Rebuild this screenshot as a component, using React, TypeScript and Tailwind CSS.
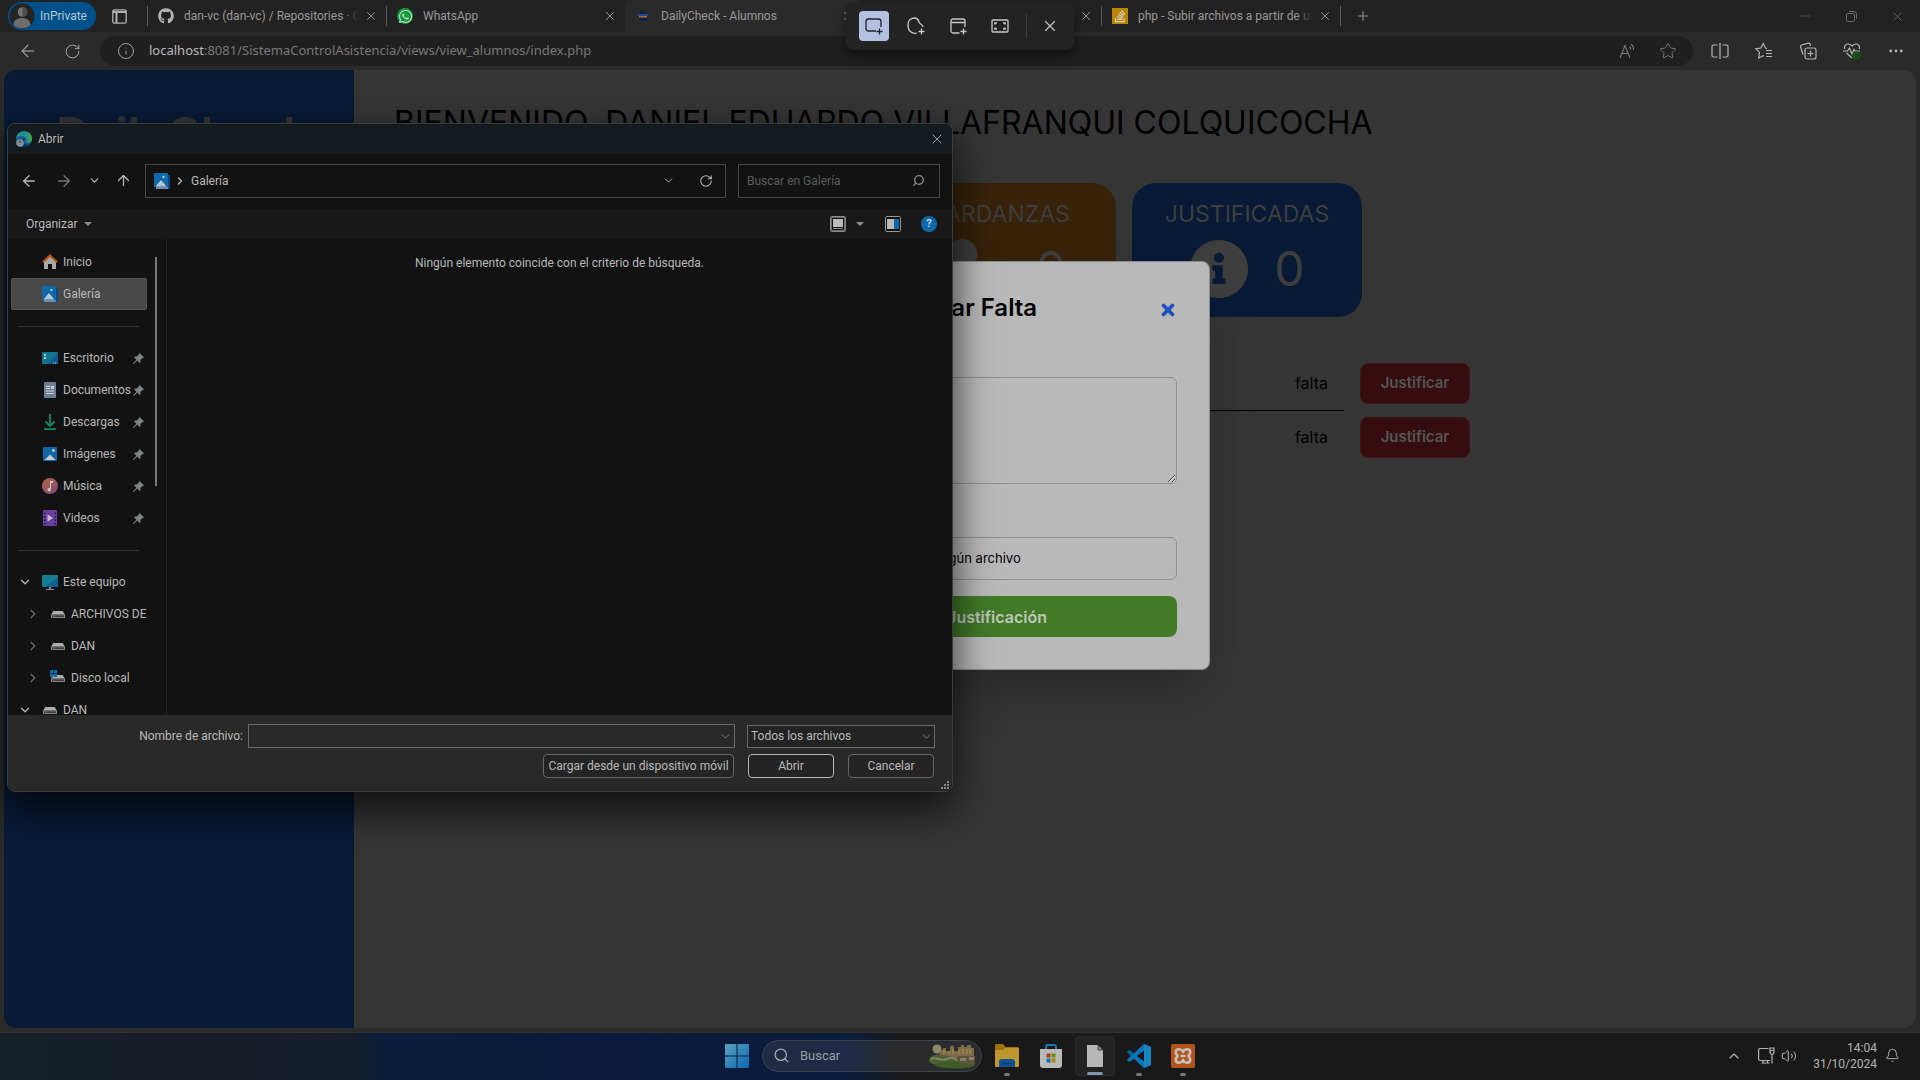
import type { ReactNode } from "react";
import {
  ArrowLeft,
  ArrowRight,
  ArrowUp,
  Bell,
  ChevronDown,
  ChevronRight,
  ChevronUp,
  Ellipsis,
  Info,
  Minus,
  Plus,
  RotateCw,
  Search,
  Star,
  Volume2,
  X,
} from "lucide-react";
import { FaGithub, FaInfoCircle, FaStackOverflow, FaUserClock, FaWhatsapp } from "react-icons/fa";

/* ---------- small drawings ---------- */

function GalleryIcon() {
  return (
    <svg width="16" height="16" viewBox="0 0 16 16" className="shrink-0">
      <rect x="2.5" y="2" width="13.5" height="14" rx="1" fill="#0b4a86" />
      <rect x="2" y="14" width="12" height="2" fill="#6d8fae" />
      <rect width="14" height="14" rx="1" fill="#0f69a8" />
      <path d="M1.5 13.5 7 7l5.5 6.5z" fill="#bcc6cf" />
      <circle cx="9.5" cy="4" r="1.2" fill="#bcc6cf" />
    </svg>
  );
}

function HomeIcon() {
  return (
    <svg width="16" height="16" viewBox="0 0 16 16" className="shrink-0">
      <path d="M2 7.5 8 2l6 5.5V15H10v-5H6v5H2z" fill="#a9a9a9" />
      <path d="M.8 8.2 8 1.4l7.2 6.8" fill="none" stroke="#b5560f" strokeWidth="2" />
    </svg>
  );
}

function DesktopIcon() {
  return (
    <svg width="16" height="16" viewBox="0 0 16 16" className="shrink-0">
      <rect y="2" width="16" height="12" rx="1" fill="#137490" />
      <path d="M16 3v11H6z" fill="#0c5a8e" />
      <path d="M2 4h2v2H2zM2 7h2v2H2zM11 12.5h1v1h-1zM13 12.5h1v1h-1z" fill="#b9c6cc" />
    </svg>
  );
}

function DocumentsIcon() {
  return (
    <svg width="16" height="16" viewBox="0 0 16 16" className="shrink-0">
      <rect x="2" width="12" height="16" rx="1" fill="#6f8096" />
      <path d="M4 4h4v1H4zM4 6h4v1H4zM9 4h3v3H9zM4 8.5h8v1H4zM4 11h8v1H4z" fill="#c8cdd3" />
    </svg>
  );
}

function DownloadsIcon() {
  return (
    <svg width="16" height="16" viewBox="0 0 16 16" className="shrink-0" fill="none" stroke="#138a68" strokeWidth="1.8">
      <path d="M8 0v12M3.5 7.5 8 12l4.5-4.5M2 15.1h12" />
    </svg>
  );
}

function PicturesIcon() {
  return (
    <svg width="16" height="16" viewBox="0 0 16 16" className="shrink-0">
      <rect x="1" y="1" width="14" height="14" rx="1" fill="#0f67a8" />
      <path d="M2.5 14 8 8.5 13.5 14z" fill="#c4ccd3" />
      <circle cx="11.5" cy="4.5" r="1.4" fill="#c4ccd3" />
    </svg>
  );
}

function MusicIcon() {
  return (
    <svg width="16" height="16" viewBox="0 0 16 16" className="shrink-0">
      <defs>
        <linearGradient id="music" x1="0" y1="0" x2="1" y2="1">
          <stop offset="0" stopColor="#b5643e" />
          <stop offset="1" stopColor="#7d4778" />
        </linearGradient>
      </defs>
      <circle cx="8" cy="8" r="8" fill="url(#music)" />
      <path d="M8 3h3v2H9v6.5A1.8 1.8 0 1 1 8 10z" fill="#c9c4c4" />
    </svg>
  );
}

function VideosIcon() {
  return (
    <svg width="16" height="16" viewBox="0 0 16 16" className="shrink-0">
      <rect x="1" width="14" height="16" rx="1" fill="#6b3fa0" />
      <path
        d="M2 2.5h1.5V4H2zM2 6h1.5v1.5H2zM2 9.5h1.5V11H2zM2 13h1.5v1.5H2zM12.5 2.5H14V4h-1.5zM12.5 6H14v1.5h-1.5zM12.5 9.5H14V11h-1.5zM12.5 13H14v1.5h-1.5z"
        fill="#2a1446"
      />
      <path d="M5.5 4.5 11 8l-5.5 3.5z" fill="#c7bdd3" />
    </svg>
  );
}

function ComputerIcon() {
  return (
    <svg width="16" height="16" viewBox="0 0 16 16" className="shrink-0">
      <rect y="1" width="16" height="12" rx="1" fill="#157d92" />
      <path d="M16 3v9a1 1 0 0 1-1 1H3z" fill="#0e6190" />
      <path d="M7 13h2v2h3v1H4v-1h3z" fill="#8b9499" />
    </svg>
  );
}

function DriveIcon({ system = false }: { system?: boolean }) {
  return (
    <svg width="16" height="16" viewBox="0 0 16 16" className="shrink-0">
      <path d="M3.5 5h9L15 8.5H1z" fill="#adadad" />
      <path d="M1 8.5h14V12H1z" fill="#8a8a8a" />
      <path d="M2 9.3h12v1.8H2z" fill="#3c3c3c" />
      <path d="M3.5 9.7h1v1h-1z" fill="#2fae4c" />
      {system && <path d="M0 0h3.3v3.2H0zM3.9 0h3.3v3.2H3.9zM0 3.8h3.3V7H0zM3.9 3.8h3.3V7H3.9z" fill="#0e6cab" />}
    </svg>
  );
}

function PinIcon() {
  return (
    <svg width="11" height="11" viewBox="0 0 11 11" className="shrink-0">
      <path d="M6.5 0 11 4.5l-1 .8-.8-.1-1.8 1.9.2 2-.9.9L4.2 7.5.8 11 0 10.2l3.5-3.4L1 4.3l.9-.9 2 .2 1.9-1.8-.1-.9z" fill="#7c8489" />
    </svg>
  );
}

function EdgeIcon() {
  return (
    <svg width="16" height="16" viewBox="0 0 16 16" className="shrink-0">
      <circle cx="8" cy="8" r="8" fill="#0d5c9b" />
      <path d="M.6 5.5A8 8 0 0 1 16 8c0 2.6-2 3.9-4 3.9-2.2 0-2.6-.9-2-1.7.8-1 .8-4.2-2.5-4.7C4.5 5 1.5 5.5.1 7.500z" fill="#27918f" />
      <path d="M12.5 1.5A8 8 0 0 1 16 8c0 2.5-2.2 3.9-4.3 3.8z" fill="#3d9e55" />
      <path d="M8.5 7c-2 .8-2.5 3-1 5 1.8 2.2 5 2 6.5 1.2L11 16H7z" fill="#06325f" />
      <circle cx="4" cy="12" r="3.8" fill="#8a8f94" />
      <circle cx="4" cy="10.8" r="1.3" fill="#55595d" />
    </svg>
  );
}

function SiteIcon() {
  return (
    <svg width="16" height="16" viewBox="0 0 16 16" className="shrink-0">
      <path d="M5 3.500h6l1 2.500v6.500H4V6z" fill="#0c2347" />
      <path d="M3 6h10v2H3z" fill="#1d4d8c" />
      <path d="M4 8h8v1.5H4z" fill="#b0653a" />
    </svg>
  );
}

function VsCodeIcon() {
  return (
    <svg width="24" height="24" viewBox="0 0 24 24">
      <path d="M17 0 7 9.5 2.5 6 .3 7.3v1.5L17 24z" fill="#08609d" />
      <path d="M17 0 .3 15.2v1.5L2.5 18 7 14.5 17 24l7-3V3z" fill="#0a75b5" />
      <path d="M17 6.5v11L9.8 12z" fill="#191919" />
      <path d="M17 0v24l7-3V3z" fill="#1684c3" />
    </svg>
  );
}

function XamppIcon() {
  return (
    <svg width="24" height="24" viewBox="0 0 24 24">
      <rect width="24" height="24" rx="2" fill="#b4531a" />
      <path
        d="M12 7.500C10.500 5 5 4 4.800 8c-.1 2.500 1.700 3 1.700 4s-1.800 1.500-1.700 4c.2 4 5.700 3 7.200.5 1.500 2.500 7 3.500 7.200-.5.1-2.500-1.700-3-1.700-4s1.800-1.500 1.700-4C19 4 13.500 5 12 7.500zM9.500 12h5"
        fill="none"
        stroke="#c4c0bd"
        strokeWidth="2.6"
      />
    </svg>
  );
}

function FolderAppIcon() {
  return (
    <svg width="24" height="24" viewBox="0 0 24 24">
      <path d="M0 1.5A1.5 1.5 0 0 1 1.5 0H8l2.5 3H23a1 1 0 0 1 1 1v6H0z" fill="#9d7309" />
      <path d="M0 6h8l2-2h13a1 1 0 0 1 1 1v17a1 1 0 0 1-1 1H1a1 1 0 0 1-1-1z" fill="#bd9630" />
      <path d="M4 23v-5a3 3 0 0 1 3-3h10a3 3 0 0 1 3 3v5z" fill="#0b5596" />
      <path d="M7 19.5h10" stroke="#073a6a" strokeWidth="1.5" />
    </svg>
  );
}

function StoreIcon() {
  return (
    <svg width="24" height="24" viewBox="0 0 24 24">
      <path d="M7 6V2.5A1.5 1.5 0 0 1 8.500 1h7A1.5 1.5 0 0 1 17 2.5V6" fill="none" stroke="#117cb0" strokeWidth="2" />
      <path d="M1 5h22v16a3 3 0 0 1-3 3H4a3 3 0 0 1-3-3z" fill="#b9b9b9" />
      <path d="M7.5 9.5h4v4h-4z" fill="#b3391f" />
      <path d="M12.5 9.5h4v4h-4z" fill="#5f9110" />
      <path d="M7.5 14.5h4v4h-4z" fill="#0a75b0" />
      <path d="M12.5 14.5h4v4h-4z" fill="#bb850a" />
    </svg>
  );
}

function FileAppIcon() {
  return (
    <svg width="24" height="24" viewBox="0 0 24 24">
      <path d="M4 1h11l5 5v17H4z" fill="#b8b8b8" />
      <path d="M15 1v5h5z" fill="#8a8a8a" stroke="#333" strokeWidth=".8" />
    </svg>
  );
}

function WindowsIcon() {
  return (
    <svg width="24" height="24" viewBox="0 0 24 24">
      <defs>
        <linearGradient id="win" x1="0" y1="0" x2="1" y2="1">
          <stop offset="0" stopColor="#5aa2bd" />
          <stop offset="1" stopColor="#0b68b4" />
        </linearGradient>
      </defs>
      <path
        d="M1 0h10.5v11.500H0V1a1 1 0 0 1 1-1zM12.5 0H23a1 1 0 0 1 1 1v10.500H12.500zM0 12.500h11.500V24H1a1 1 0 0 1-1-1zM12.500 12.500H24V23a1 1 0 0 1-1 1H12.500z"
        fill="url(#win)"
      />
    </svg>
  );
}

function CastleArt() {
  return (
    <svg width="48" height="26" viewBox="0 0 48 26">
      <ellipse cx="16" cy="17" rx="16" ry="6.5" fill="#4c5f3a" />
      <ellipse cx="26" cy="22" rx="20" ry="3.5" fill="#3f5c26" />
      <circle cx="8" cy="6" r="4.5" fill="#8d8870" />
      <path d="M11 12V7h3v-2h3v3h4V4l2-2 2 2v4h4V4h3V2h3v2h3V2h4v3h3v11H26l-6-3z" fill="#7b6d4c" />
      <path d="M15 8v3M20 8v3M24 6v5M30 7v4M34 6v5M38 6v5M41 6v5" stroke="#b59343" />
      <path d="M29 13h17v8H33l-6-4z" fill="#5d5544" />
      <path d="M2 16c6-3 10 3 16 0 4-2 8-1 10 2" fill="none" stroke="#7d8a55" strokeWidth="2" />
      <path d="M31 15h6v3h-6zM40 14h5v3h-5z" fill="#8b8068" />
    </svg>
  );
}

/* ---------- browser ---------- */

function Tab({ icon, title, active = false, fade = false }: { icon: ReactNode; title: string; active?: boolean; fade?: boolean }) {
  return (
    <div
      className={
        active
          ? "flex h-8 w-[238px] items-center gap-2.5 rounded-t-lg bg-[#2a2a2a] pr-2 pl-2.5"
          : "flex h-8 w-[238px] items-center gap-2.5 pr-2 pl-2.5"
      }
    >
      {icon}
      <button className="relative -mr-1 min-w-0 flex-1 overflow-hidden text-left text-xs whitespace-nowrap text-[#999]">
        {title}
        {fade && <span className="absolute inset-y-0 right-0 w-4 bg-linear-to-r from-transparent to-[#222]" />}
      </button>
      <button aria-label="Cerrar pestaña" className="text-[#a5a5a5]">
        <X size={14} strokeWidth={1.5} />
      </button>
    </div>
  );
}

function TabDivider() {
  return <span className="h-5 w-px shrink-0 bg-[#5a5a5a]" />;
}

function TabStrip() {
  return (
    <div className="flex h-8 items-center bg-[#222] pl-2">
      <button className="flex h-7 w-[88px] shrink-0 items-center rounded-full bg-[#00508c] text-xs text-[#b9c8d4]">
        <svg width="26" height="26" viewBox="0 0 26 26" className="mx-px shrink-0">
          <circle cx="13" cy="13" r="12.5" fill="#232323" />
          <circle cx="13.5" cy="9" r="4.8" fill="#757575" />
          <path d="M4.5 22c0-5 4-7 8.5-7s8.5 2 8.5 7a12.5 12.5 0 0 1-17 0z" fill="#6d6d6d" />
          <path d="M13.5 4.2a4.8 4.8 0 0 1 0 9.6z" fill="#4d4d4d" />
        </svg>
        <span className="ml-1">InPrivate</span>
      </button>
      <button aria-label="Menú de pestañas" className="mr-5 ml-4 shrink-0 text-[#b4b4b4]">
        <svg width="15" height="15" viewBox="0 0 15 15" fill="none" stroke="currentColor">
          <rect x=".8" y=".8" width="13.4" height="13.4" rx="1.5" strokeWidth="1.3" />
          <path d="M1 3h13M4.5 4v10" strokeWidth="2" />
        </svg>
      </button>
      <TabDivider />
      <Tab fade icon={<FaGithub size={16} color="#b4b4b4" className="shrink-0" />} title="dan-vc (dan-vc) / Repositories · GitHub" />
      <TabDivider />
      <Tab
        icon={
          <span className="flex size-4 shrink-0 items-center justify-center rounded-full bg-[#0e9a35]">
            <FaWhatsapp size={15} color="#c9d6cc" />
          </span>
        }
        title="WhatsApp"
      />
      <Tab active icon={<SiteIcon />} title="DailyCheck - Alumnos" />
      <Tab icon={<span className="size-4 shrink-0" />} title="" />
      <TabDivider />
      <Tab
        fade
        icon={
          <span className="flex size-4 shrink-0 items-center justify-center bg-[#b98508]">
            <FaStackOverflow size={14} color="#d8d0bb" />
          </span>
        }
        title="php - Subir archivos a partir de una carpeta"
      />
      <TabDivider />
      <button aria-label="Nueva pestaña" className="shrink-0 pl-3.5 text-[#a5a5a5]">
        <Plus size={16} strokeWidth={1.25} />
      </button>
      <div className="ml-auto flex shrink-0 items-center text-[#6b6b6b]">
        <button aria-label="Minimizar" className="flex w-[46px] justify-center">
          <Minus size={14} strokeWidth={1.25} />
        </button>
        <button aria-label="Restaurar" className="flex w-[46px] justify-center">
          <svg width="11" height="11" viewBox="0 0 11 11" fill="none" stroke="currentColor">
            <rect x=".5" y="2.5" width="8" height="8" rx="1.5" />
            <path d="M3 .5h5A2.5 2.5 0 0 1 10.5 3v5" />
          </svg>
        </button>
        <button aria-label="Cerrar ventana" className="flex w-[46px] justify-center">
          <X size={15} strokeWidth={1.25} />
        </button>
      </div>
    </div>
  );
}

function AddressBar() {
  return (
    <div className="flex h-[38px] items-center">
      <div className="flex w-[100px] shrink-0 items-center gap-[26px] pl-[18px] text-[#b8b8b8]">
        <button aria-label="Atrás">
          <ArrowLeft size={20} strokeWidth={1.25} />
        </button>
        <button aria-label="Actualizar">
          <RotateCw size={17} strokeWidth={1.25} />
        </button>
      </div>
      <div className="flex h-[30px] flex-1 items-center rounded-full bg-[#1f1f1f] pr-4 pl-[17px]">
        <Info size={18} strokeWidth={1.25} color="#a5a5a5" />
        <div className="ml-3.5 flex-1 font-['Noto_Sans',sans-serif] text-[13px] text-[#777]">
          <span className="text-[#b9b9b9]">localhost</span>:8081/SistemaControlAsistencia/views/view_alumnos/index.php
        </div>
        <button aria-label="Leer en voz alta" className="mr-[23px] text-[#7a7a7a]">
          <svg width="17" height="16" viewBox="0 0 17 16" fill="none" stroke="currentColor" strokeWidth="1.1">
            <path d="M1 15 6 2.5 11 15M2.8 10.5h6.4M10.5 3.5c1 .8 1.3 1.8 1.2 3M12 1.2c2 1.5 2.8 3.5 2.4 5.8" />
          </svg>
        </button>
        <button aria-label="Agregar a favoritos" className="text-[#7a7a7a]">
          <Star size={18} strokeWidth={1.25} />
        </button>
      </div>
      <div className="ml-[18px] flex shrink-0 items-center gap-[26px] pr-[15px] text-[#b4b4b4]">
        <button aria-label="Pantalla dividida">
          <svg width="18" height="18" viewBox="0 0 18 18" fill="none" stroke="currentColor" strokeWidth="1.2">
            <path d="M9 1v16M6.500 3h-4A1.5 1.5 0 0 0 1 4.5v9A1.5 1.5 0 0 0 2.500 15h4M11.500 3h4A1.5 1.5 0 0 1 17 4.500v9a1.5 1.5 0 0 1-1.500 1.500h-4" />
          </svg>
        </button>
        <button aria-label="Favoritos">
          <svg width="18" height="18" viewBox="0 0 18 18" fill="none" stroke="currentColor" strokeWidth="1.2">
            <path d="M12 6.3 10.5 6 8.2 1.5 5.9 6l-5 .8 3.6 3.6L3.700 16l4.500-2.400.8.400M11 8.500h6M11 11.500h6M11 14.500h6" />
          </svg>
        </button>
        <button aria-label="Colecciones">
          <svg width="18" height="18" viewBox="0 0 18 18" fill="none" stroke="currentColor" strokeWidth="1.2">
            <rect x="6" y="6" width="11" height="11" rx="2" />
            <path d="M11.5 8.500v6M8.500 11.500h6M4 12.500 1.600 5A1.600 1.600 0 0 1 2.700 3l6.500-1.800a1.600 1.600 0 0 1 2 1.200L11.500 4" />
          </svg>
        </button>
        <button aria-label="Rendimiento">
          <svg width="18" height="18" viewBox="0 0 18 18" fill="none" stroke="currentColor" strokeWidth="1.2">
            <path d="M1.500 7C1 3.500 3 2 5 2s3.200 1.200 4 2c.8-.8 2-2 4-2s4 1.500 3.500 5M3.500 11 9 16M0 9h4.500L6.500 6l2.500 6 2-4.500 1 1.500h5" />
            <circle cx="13.5" cy="13.5" r="4" fill="#0c5a12" stroke="none" />
            <path d="m11.800 13.500 1.200 1.200 2.200-2.300" stroke="#2b2b2b" />
          </svg>
        </button>
        <button aria-label="Más opciones">
          <Ellipsis size={18} strokeWidth={1.75} />
        </button>
      </div>
    </div>
  );
}

/* ---------- web page ---------- */

function StatCard({ title, value, color, icon }: { title: string; value: number; color: string; icon: ReactNode }) {
  return (
    <section className={`flex h-[134px] flex-col items-center rounded-3xl pt-[17px] ${color}`}>
      <h2 className="text-[23px] leading-7">{title}</h2>
      <div className="mt-[11px] flex items-center gap-[25px]">
        {icon}
        <span className="text-5xl">{value}</span>
      </div>
    </section>
  );
}

function AbsenceTable() {
  return (
    <table className="mt-[39px] w-[1076px] text-black">
      <tbody>
        {[1, 2].map((row) => (
          <tr key={row} className="group h-[54px]">
            <td className="border-black pr-4 text-right group-first:border-b">falta</td>
            <td className="w-[126px] pl-4">
              <button className="block h-[41px] w-[110px] rounded-lg border border-[#401416] bg-[#350d10] pt-px text-[15px] font-semibold text-[#555]">
                Justificar
              </button>
            </td>
          </tr>
        ))}
      </tbody>
    </table>
  );
}

function JustifyModal() {
  return (
    <form className="w-[500px] rounded-lg border border-[#8a8a8a] bg-[#b9b9b9] px-8 pt-[30px] pb-8 text-black shadow-2xl">
      <div className="flex h-8 items-center">
        <h2 className="flex-1 text-center text-2xl font-semibold">Justificar Falta</h2>
        <button type="button" aria-label="Cerrar" className="pt-1 text-[#1c53bd]">
          <X size={18} strokeWidth={5} />
        </button>
      </div>
      <textarea aria-label="Motivo" className="mt-[53px] block h-[107px] w-full rounded-md border border-[#909090] bg-transparent" />
      <label className="mt-[53px] flex h-[43px] items-center rounded-md border border-[#909090] px-3 text-[13px]">
        <input type="file" className="sr-only" />
        <span className="w-[172px]">Elegir archivo</span>
        <span>Ningún archivo</span>
      </label>
      <button type="button" className="mt-4 h-[41px] w-full rounded-lg bg-[#427a28] text-base font-semibold text-[#bfc6bb]">
        Registrar Justificación
      </button>
    </form>
  );
}

function WebPage() {
  return (
    <div className="relative mx-1 flex flex-1 overflow-hidden rounded-xl bg-[#353535] font-['Inter',sans-serif] text-[#3e3e3e]">
      <aside className="w-[350px] shrink-0 bg-[#081a36] pt-9 pl-[52px]">
        <p className="text-[46px] leading-[56px] font-semibold text-[#353535]">DailyCheck</p>
      </aside>
      <main className="flex-1 px-10 pt-[33px]">
        <h1 className="text-[32px] leading-10 text-black">BIENVENIDO, DANIEL EDUARDO VILLAFRANQUI COLQUICOCHA</h1>
        <div className="mt-10 grid grid-cols-[repeat(4,230px)] gap-4">
          <div className="col-start-3">
            <StatCard title="TARDANZAS" value={0} color="bg-[#38220a]" icon={<FaUserClock size={60} className="w-[75px]" />} />
          </div>
          <StatCard title="JUSTIFICADAS" value={0} color="bg-[#081a36]" icon={<FaInfoCircle size={60} />} />
        </div>
        <AbsenceTable />
      </main>
      <div className="absolute inset-x-0 top-[191px] flex justify-center">
        <JustifyModal />
      </div>
    </div>
  );
}

/* ---------- file dialog ---------- */

interface Place {
  name: string;
  icon: ReactNode;
  pinned?: boolean;
  selected?: boolean;
  open?: boolean;
  child?: boolean;
}

const quick: Place[] = [
  { name: "Inicio", icon: <HomeIcon /> },
  { name: "Galería", icon: <GalleryIcon />, selected: true },
];
const pinned: Place[] = [
  { name: "Escritorio", icon: <DesktopIcon />, pinned: true },
  { name: "Documentos", icon: <DocumentsIcon />, pinned: true },
  { name: "Descargas", icon: <DownloadsIcon />, pinned: true },
  { name: "Imágenes", icon: <PicturesIcon />, pinned: true },
  { name: "Música", icon: <MusicIcon />, pinned: true },
  { name: "Videos", icon: <VideosIcon />, pinned: true },
];
const drives: Place[] = [
  { name: "Este equipo", icon: <ComputerIcon />, open: true },
  { name: "ARCHIVOS DE", icon: <DriveIcon />, child: true },
  { name: "DAN", icon: <DriveIcon />, child: true },
  { name: "Disco local", icon: <DriveIcon system />, child: true },
  { name: "DAN", icon: <DriveIcon />, open: true },
];

function PlaceRow({ place }: { place: Place }) {
  return (
    <li
      className={
        place.selected
          ? "flex h-8 items-center rounded-xs border border-[#555] bg-[#484848] pr-[2px]"
          : "flex h-8 items-center border border-transparent pr-[2px]"
      }
    >
      <span className={place.child ? "flex w-[38px] shrink-0 pl-3.5 text-[#6a6a6a]" : "flex w-[30px] shrink-0 pl-1.5 text-[#a9a9a9]"}>
        {place.open && <ChevronDown size={14} strokeWidth={2.5} />}
        {place.child && <ChevronRight size={14} strokeWidth={2.5} />}
      </span>
      <button className="flex min-w-0 flex-1 items-center gap-[5px] whitespace-nowrap">
        {place.icon}
        {place.name}
      </button>
      {place.pinned && <PinIcon />}
    </li>
  );
}

function NavSeparator() {
  return (
    <li className="flex h-8 items-center pr-2 pl-[7px]">
      <span className="h-px w-full bg-[#333]" />
    </li>
  );
}

function FileDialog() {
  return (
    <div
      role="dialog"
      aria-label="Abrir"
      className="absolute top-[123px] left-[7px] flex h-[669px] w-[946px] flex-col overflow-hidden rounded-lg border border-[#3a3d40] bg-[#121212] text-xs text-[#b9b9b9] shadow-[0_16px_40px_rgba(0,0,0,0.75)]"
    >
      <header className="flex h-[30px] shrink-0 items-center bg-[#141a1e] pr-[7px] pl-2">
        <EdgeIcon />
        <span className="ml-1.5 flex-1">Abrir</span>
        <button aria-label="Cerrar">
          <X size={16} strokeWidth={1.25} />
        </button>
      </header>

      <div className="flex h-[55px] shrink-0 items-center pr-3 pb-[2px] pl-3">
        <button aria-label="Atrás">
          <ArrowLeft size={18} strokeWidth={1.75} />
        </button>
        <button aria-label="Adelante" className="ml-[17px] text-[#777]">
          <ArrowRight size={18} strokeWidth={1.75} />
        </button>
        <button aria-label="Recientes" className="ml-[15px]">
          <ChevronDown size={13} strokeWidth={2.25} />
        </button>
        <button aria-label="Subir" className="ml-3.5">
          <ArrowUp size={17} strokeWidth={1.75} />
        </button>
        <div className="ml-[13px] flex h-[34px] flex-1 items-center border border-[#484848] pr-3 pl-2">
          <GalleryIcon />
          <ChevronRight size={12} strokeWidth={2.75} className="mx-1" />
          <span className="ml-px flex-1">Galería</span>
          <button aria-label="Ubicaciones" className="mr-6">
            <ChevronDown size={13} strokeWidth={1.75} />
          </button>
          <button aria-label="Actualizar">
            <RotateCw size={14} strokeWidth={1.75} />
          </button>
        </div>
        <label className="ml-3 flex h-[34px] w-[202px] items-center border border-[#484848] pr-3.5 pl-2">
          <input aria-label="Buscar en Galería" placeholder="Buscar en Galería" className="min-w-0 flex-1 outline-none placeholder:text-[#5c5c5c]" />
          <Search size={13} strokeWidth={2.5} className="-scale-x-100 text-[#858585]" />
        </label>
      </div>

      <div className="flex h-[30px] shrink-0 items-center bg-[#181818] pr-[15px] pl-[18px]">
        <button className="flex flex-1 items-center gap-1.5">
          Organizar
          <span className="border-x-4 border-t-4 border-x-transparent border-t-[#8f8f8f]" />
        </button>
        <button aria-label="Cambiar vista">
          <svg width="16" height="16" viewBox="0 0 16 16">
            <rect x=".5" y=".5" width="15" height="15" rx="1" fill="#111" stroke="#8a8a8a" />
            <rect x="1.5" y="1.5" width="13" height="13" fill="none" stroke="#6d6d6d" />
            <path d="M3 3h10v8H3z" fill="#b9b9b9" />
            <path d="M3 12.5h10" stroke="#8a8a8a" />
          </svg>
        </button>
        <button aria-label="Más vistas" className="ml-2.5">
          <span className="block border-x-4 border-t-4 border-x-transparent border-t-[#8f8f8f]" />
        </button>
        <button aria-label="Panel de vista previa" className="ml-[21px]">
          <svg width="16" height="16" viewBox="0 0 16 16">
            <rect x=".5" y=".5" width="15" height="15" rx="1" fill="#111" stroke="#9a9a9a" />
            <path d="M2 3h7v10H2z" fill="#b9b9b9" />
            <path d="M9 3h5v10H9z" fill="#0c68aa" />
          </svg>
        </button>
        <button aria-label="Ayuda" className="ml-5 size-4 rounded-full bg-[#0d69aa] text-center text-[11px] leading-4 font-bold text-[#c5d3dd]">
          ?
        </button>
      </div>

      <div className="flex min-h-0 flex-1">
        <nav className="flex w-[159px] shrink-0 overflow-hidden border-r border-[#242424] pt-[7px] pl-[3px]">
          <ul className="h-[476px] w-[136px]">
            {quick.map((p) => (
              <PlaceRow key={p.name} place={p} />
            ))}
            <NavSeparator />
            {pinned.map((p) => (
              <PlaceRow key={p.name} place={p} />
            ))}
            <NavSeparator />
            {drives.map((p, i) => (
              <PlaceRow key={i} place={p} />
            ))}
          </ul>
          <span className="mt-[11px] ml-2 h-[229px] w-0.5 bg-[#7a7a7a]" />
        </nav>
        <p className="flex-1 pt-4 text-center">Ningún elemento coincide con el criterio de búsqueda.</p>
      </div>

      <footer className="relative h-[76px] shrink-0 bg-[#292929] pt-[9px] pr-[17px]">
        <div className="flex items-center justify-end">
          <label htmlFor="file-name" className="mr-[5px]">
            Nombre de archivo:
          </label>
          <div className="flex h-6 w-[487px] items-center border border-[#6b6b6b] bg-[#282828] pr-0.5">
            <input id="file-name" className="min-w-0 flex-1 outline-none" />
            <ChevronDown size={13} strokeWidth={1.5} color="#8f8f8f" />
          </div>
          <div className="relative ml-3 h-[23px] w-[188px]">
            <select aria-label="Tipo de archivo" className="h-full w-full appearance-none border border-[#6b6b6b] bg-[#232323] pl-[3px]">
              <option>Todos los archivos</option>
            </select>
            <ChevronDown size={13} strokeWidth={1.5} color="#8f8f8f" className="pointer-events-none absolute top-[5px] right-0.5" />
          </div>
        </div>
        <div className="mt-1.5 flex justify-end pr-px">
          <button className="h-6 w-[191px] rounded-sm border border-[#686868] bg-[#242424]">Cargar desde un dispositivo móvil</button>
          <button className="ml-3.5 h-6 w-[86px] rounded-sm border border-[#b5b5b5] bg-[#242424]">Abrir</button>
          <button className="ml-3.5 h-6 w-[86px] rounded-sm border border-[#686868] bg-[#242424]">Cancelar</button>
        </div>
        <svg width="8" height="8" viewBox="0 0 8 8" className="absolute right-[3px] bottom-0.5" fill="#8a8a8a">
          <path d="M6 0h2v2H6zM6 3h2v2H6zM6 6h2v2H6zM3 3h2v2H3zM3 6h2v2H3zM0 6h2v2H0z" />
        </svg>
      </footer>
    </div>
  );
}

/* ---------- snipping toolbar ---------- */

function SnipToolbar() {
  return (
    <div className="absolute top-0.5 left-1/2 flex h-12 w-[228px] -translate-x-1/2 items-center rounded-lg bg-[#232323] pl-[13px] text-[#c9c9c9] shadow-[0_6px_12px_rgba(0,0,0,0.4)]">
      <button aria-label="Rectángulo" className="flex h-[30px] w-[30px] items-center justify-center rounded-sm bg-[#b3c0e0] text-[#20242e]">
        <svg width="18" height="18" viewBox="0 0 18 18" fill="none" stroke="currentColor" strokeWidth="1.3">
          <path d="M11 14H3.500A2.500 2.500 0 0 1 1 11.500v-7A2.500 2.500 0 0 1 3.500 2h10A2.500 2.500 0 0 1 16 4.500V10M14.500 11.500v6M11.500 14.500h6" />
        </svg>
      </button>
      <button aria-label="Forma libre" className="ml-[18px]">
        <svg width="18" height="18" viewBox="0 0 18 18" fill="none" stroke="currentColor" strokeWidth="1.3">
          <path d="M10 16c-5 1.500-9-2-9-8 0-4 2.500-7 6.500-7 5 0 3.500 4 5.500 5.500 1.500 1 3 1.500 3 3.500M14.500 11.500v6M11.500 14.500h6" />
        </svg>
      </button>
      <button aria-label="Ventana" className="ml-6">
        <svg width="18" height="18" viewBox="0 0 18 18" fill="none" stroke="currentColor" strokeWidth="1.3">
          <path d="M10.500 16H4a2 2 0 0 1-2-2V4a2 2 0 0 1 2-2h10a2 2 0 0 1 2 2v6M2 5.500h14M14.500 11.500v6M11.500 14.500h6" />
        </svg>
      </button>
      <button aria-label="Pantalla completa" className="ml-6">
        <svg width="18" height="18" viewBox="0 0 18 18" fill="none" stroke="currentColor" strokeWidth="1.3">
          <rect x="1" y="3" width="16" height="12" rx="1" />
          <path d="M4 7.500V6h2M12 6h2v1.500M14 10.500V12h-2M6 12H4v-1.500" strokeWidth="1.6" />
        </svg>
      </button>
      <span className="ml-[17px] h-6 w-px bg-[#3d3d3d]" />
      <button aria-label="Cerrar recorte" className="ml-3.5">
        <X size={18} strokeWidth={1.5} />
      </button>
    </div>
  );
}

/* ---------- taskbar ---------- */

function TaskApp({ label, children, state }: { label: string; children: ReactNode; state?: "running" | "active" }) {
  return (
    <button
      aria-label={label}
      className={
        state === "active"
          ? "relative flex size-10 items-center justify-center rounded-sm border border-[#2c2c2c] bg-[#222]"
          : "relative flex size-10 items-center justify-center"
      }
    >
      {children}
      {state === "running" && <span className="absolute bottom-0 left-1/2 h-[3px] w-1.5 -translate-x-1/2 rounded-full bg-[#777]" />}
      {state === "active" && <span className="absolute bottom-0 left-1/2 h-[3px] w-4 -translate-x-1/2 rounded-full bg-[#8490b4]" />}
    </button>
  );
}

function Taskbar() {
  return (
    <footer className="flex h-12 items-center border-t border-[#333] bg-linear-[to_right,#152127_0%,#171c26_9%,#151e29_18%,#0b1d3a_20%,#0a1c38_26%,#0b1a3e_30%,#0a1c3e_44%,#191919_47%] px-5 pb-0.5">
      <div className="flex-1" />
      <div className="flex items-center gap-1">
        <TaskApp label="Inicio">
          <WindowsIcon />
        </TaskApp>
        <label className="mx-px flex h-8 w-[220px] items-center rounded-full border border-[#3b4450] bg-linear-to-r from-[#1e2b40] from-0% via-[#1f2b48] via-40% to-[#2b2b2b] to-60% pr-1 pl-2.5">
          <Search size={17} strokeWidth={1.75} color="#a9adb3" />
          <input
            aria-label="Buscar"
            placeholder="Buscar"
            className="ml-2.5 min-w-0 flex-1 text-[13px] outline-none placeholder:text-[#9a9ea5]"
          />
          <CastleArt />
        </label>
        <TaskApp label="Explorador de archivos" state="running">
          <FolderAppIcon />
        </TaskApp>
        <TaskApp label="Microsoft Store">
          <StoreIcon />
        </TaskApp>
        <TaskApp label="Documento" state="active">
          <FileAppIcon />
        </TaskApp>
        <TaskApp label="Visual Studio Code" state="running">
          <VsCodeIcon />
        </TaskApp>
        <TaskApp label="XAMPP" state="running">
          <XamppIcon />
        </TaskApp>
      </div>
      <div className="flex flex-1 items-center justify-end text-[#b4b4b4]">
        <button aria-label="Iconos ocultos">
          <ChevronUp size={16} strokeWidth={1.75} />
        </button>
        <button aria-label="Red" className="ml-4">
          <svg width="17" height="17" viewBox="0 0 17 17" fill="none" stroke="currentColor" strokeWidth="1.2">
            <path d="M10.500 1.500H2A1.500 1.500 0 0 0 .6 3v9A1.500 1.500 0 0 0 2 13.500h10M5 13.500V16M9.500 13.500V16M3.500 16h8M14 7v9.500" />
            <path d="M12 1h4v4.500l-1 1.500h-2l-1-1.500zM12 3.500h4" />
          </svg>
        </button>
        <button aria-label="Volumen" className="ml-1.5">
          <Volume2 size={16} strokeWidth={1.5} />
        </button>
        <div className="ml-4 text-right text-xs leading-4">
          14:04
          <br />
          31/10/2024
        </div>
        <button aria-label="Notificaciones" className="ml-2">
          <Bell size={15} strokeWidth={1.5} />
        </button>
      </div>
    </footer>
  );
}

export default function App() {
  return (
    <div className="relative flex min-h-screen flex-col bg-[#2a2a2a] font-['Roboto',sans-serif]">
      <TabStrip />
      <AddressBar />
      <WebPage />
      <div className="h-1" />
      <Taskbar />
      <FileDialog />
      <SnipToolbar />
    </div>
  );
}
